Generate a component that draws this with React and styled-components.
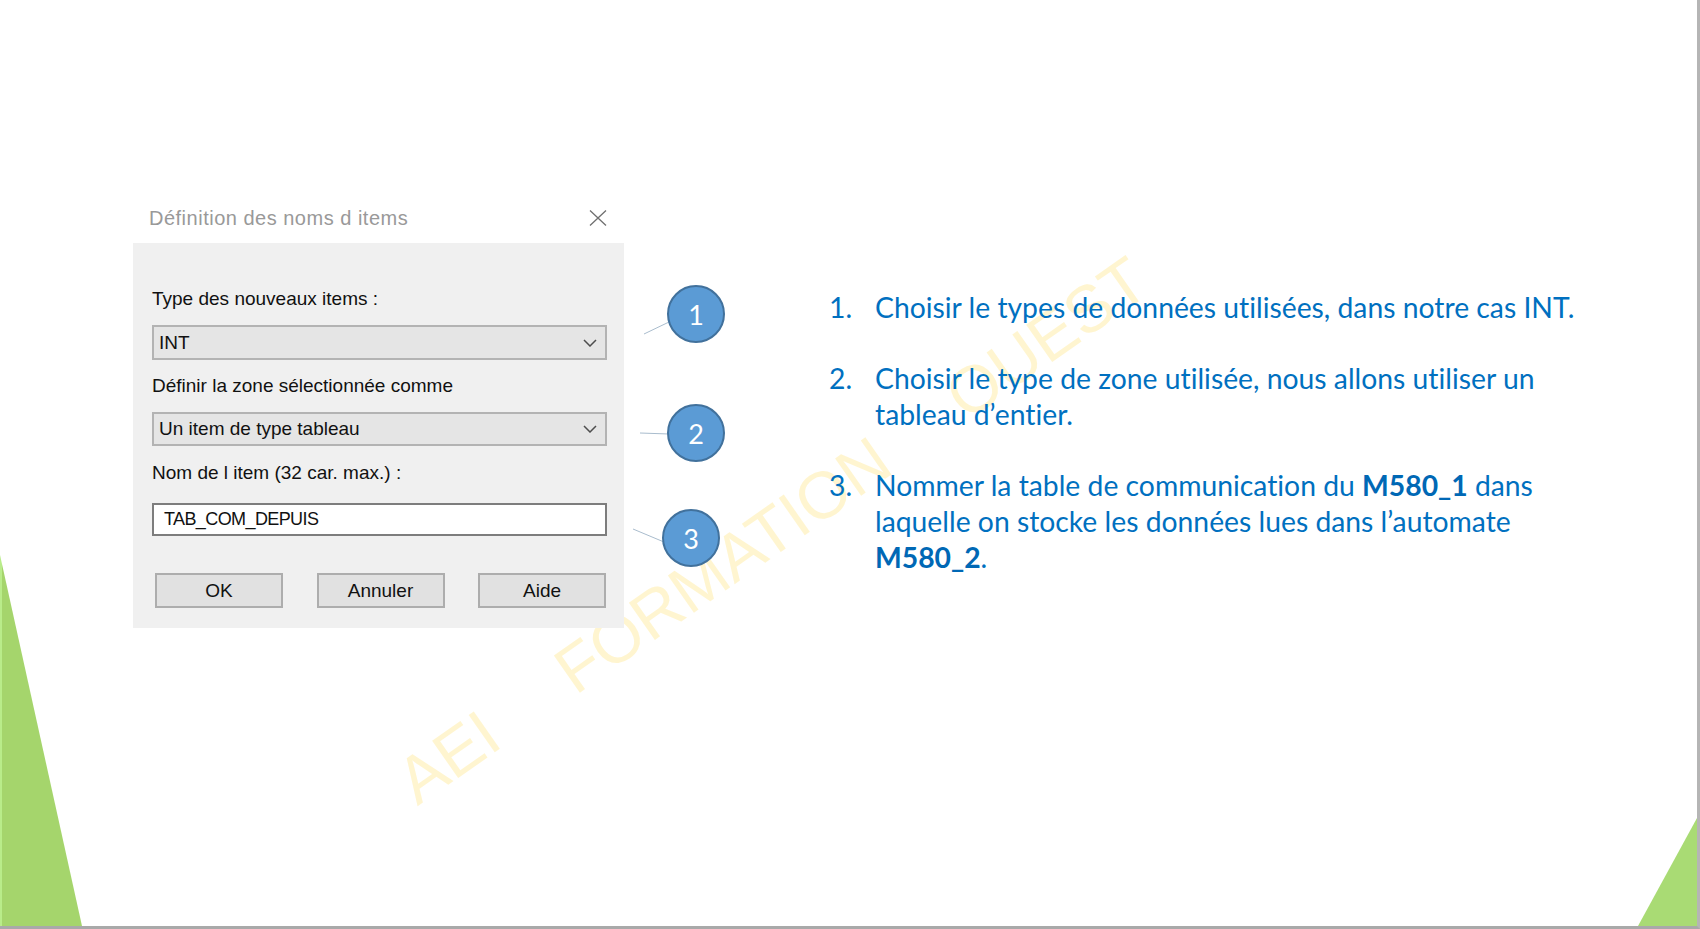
import React from 'react';
import styled, { createGlobalStyle } from 'styled-components';

const Global = createGlobalStyle`
  html, body { margin: 0; padding: 0; background: #fff; }
  body { overflow: hidden; }
`;

const Slide = styled.div`
  position: relative;
  width: 1700px;
  height: 929px;
  box-sizing: border-box;
  background: #fff;
  border-right: 3px solid #b5b5b5;
  border-bottom: 3px solid #a9a9a9;
  overflow: hidden;
`;

const CornerLeft = styled.div`
  position: absolute;
  left: 0;
  bottom: 0;
  width: 82px;
  height: 371px;
  background: linear-gradient(to right, #b9ec8a 0 2px, #a5d56c 2px);
  clip-path: polygon(0 0, 100% 100%, 0 100%);
`;

const CornerRight = styled.div`
  position: absolute;
  right: 0;
  bottom: 0;
  width: 59px;
  height: 108px;
  background: #a9db74;
  clip-path: polygon(100% 0, 100% 100%, 0 100%);
`;

const Watermark = styled.div`
  position: absolute;
  left: 772px;
  top: 530px;
  transform: translate(-50%, -50%) rotate(-35deg);
  font: 66px "Liberation Sans", Arial, sans-serif;
  color: rgba(255, 214, 60, 0.24);
  white-space: nowrap;
  word-spacing: 68px;
  pointer-events: none;
  z-index: 0;
`;

const Content = styled.div`
  position: relative;
  z-index: 1;
  display: flex;
  align-items: flex-start;
  padding: 196px 0 0 133px;
`;

const Dialog = styled.div`
  width: 491px;
  display: flex;
  flex-direction: column;
  font-family: "Liberation Sans", Arial, sans-serif;
`;

const TitleBar = styled.div`
  height: 47px;
  display: flex;
  align-items: center;
  justify-content: space-between;
  padding: 0 17px 3px 16px;
  box-sizing: border-box;
`;

const Title = styled.span`
  font-size: 20px;
  letter-spacing: 0.5px;
  color: #999;
`;

const Panel = styled.div`
  background: #f0f0f0;
  padding: 45px 17px 20px 19px;
  display: flex;
  flex-direction: column;
`;

const Label = styled.div`
  font-size: 19px;
  line-height: 22px;
  color: #111;
  margin-top: ${p => p.$mt || 0}px;
`;

const Select = styled.div`
  margin-top: ${p => p.$mt || 0}px;
  height: ${p => p.$h}px;
  box-sizing: border-box;
  background: #e5e5e5;
  border: 2px solid #b3b3b3;
  display: flex;
  align-items: center;
  justify-content: space-between;
  padding: 0 8px 0 5px;
  font-size: 19px;
  color: #111;
`;

const Input = styled.div`
  margin-top: ${p => p.$mt || 0}px;
  height: 33px;
  box-sizing: border-box;
  background: #fff;
  border: 2px solid #7d7d7d;
  display: flex;
  align-items: center;
  padding: 0 10px;
  font-size: 18px;
  letter-spacing: -0.6px;
  color: #111;
`;

const ButtonRow = styled.div`
  margin-top: 37px;
  display: flex;
  justify-content: space-between;
  padding: 0 1px 0 3px;
`;

const Button = styled.div`
  width: 128px;
  height: 35px;
  box-sizing: border-box;
  background: #e1e1e1;
  border: 2px solid #adadad;
  display: flex;
  align-items: center;
  justify-content: center;
  font-size: 19px;
  color: #111;
`;

const Callouts = styled.div`
  margin: 89px 0 0 9px;
  display: flex;
  flex-direction: column;
`;

const Callout = styled.div`
  display: flex;
  align-items: center;
  height: 58px;
  margin-top: ${p => p.$mt || 0}px;
`;

const Circle = styled.div`
  width: 58px;
  height: 58px;
  box-sizing: border-box;
  border-radius: 50%;
  background: #5b9bd5;
  border: 2px solid #41719c;
  display: flex;
  align-items: center;
  justify-content: center;
  color: #fff;
  font: 27px "Lato", "Open Sans", sans-serif;
`;

const List = styled.div`
  margin: 93px 0 0 104px;
  display: flex;
  flex-direction: column;
  gap: 35px;
  font-family: "Lato", "Open Sans", sans-serif;
  font-size: 28.3px;
  line-height: 36px;
  font-variant-ligatures: none;
  color: #0070c0;
`;

const Item = styled.div`
  display: flex;
  white-space: nowrap;
`;

const Num = styled.span`
  width: 46px;
  flex: none;
`;

const Strong = styled.b`
  font-weight: 700;
  color: #0068b5;
`;

const Chevron = () => (
  <svg width="14" height="8" viewBox="0 0 14 8">
    <path d="M1 1 L7 7 L13 1" fill="none" stroke="#4d4d4d" strokeWidth="1.5" />
  </svg>
);

const CloseX = () => (
  <svg width="18" height="16" viewBox="0 0 18 16">
    <path d="M1 0.5 L17 15.5 M17 0.5 L1 15.5" stroke="#6f6f6f" strokeWidth="1.3" />
  </svg>
);

const Connector = ({ w, x1, y1, x2, y2 }) => (
  <svg width={w} height="58" viewBox={`0 0 ${w} 58`} style={{ flex: 'none', marginRight: -2 }}>
    <line x1={x1} y1={y1} x2={x2} y2={y2} stroke="#a9bccd" strokeWidth="1" />
  </svg>
);

export default function App() {
  return (
    <>
      <Global />
      <Slide>
        <CornerLeft />
        <CornerRight />
        <Watermark>AEI FORMATION OUEST</Watermark>
        <Content>
          <Dialog>
            <TitleBar>
              <Title>Définition des noms d items</Title>
              <CloseX />
            </TitleBar>
            <Panel>
              <Label>Type des nouveaux items :</Label>
              <Select $mt={15} $h={35}>
                <span>INT</span>
                <Chevron />
              </Select>
              <Label $mt={15}>Définir la zone sélectionnée comme</Label>
              <Select $mt={15} $h={34}>
                <span>Un item de type tableau</span>
                <Chevron />
              </Select>
              <Label $mt={16}>Nom de l item (32 car. max.) :</Label>
              <Input $mt={19}>TAB_COM_DEPUIS</Input>
              <ButtonRow>
                <Button>OK</Button>
                <Button>Annuler</Button>
                <Button>Aide</Button>
              </ButtonRow>
            </Panel>
          </Dialog>
          <Callouts>
            <Callout>
              <Connector w={36} x1={11} y1={49} x2={36} y2={37} />
              <Circle>1</Circle>
            </Callout>
            <Callout $mt={61}>
              <Connector w={36} x1={7} y1={29} x2={36} y2={30} />
              <Circle>2</Circle>
            </Callout>
            <Callout $mt={47}>
              <Connector w={31} x1={0} y1={20} x2={31} y2={33} />
              <Circle>3</Circle>
            </Callout>
          </Callouts>
          <List>
            <Item>
              <Num>1.</Num>
              <span>Choisir le types de données utilisées, dans notre cas INT.</span>
            </Item>
            <Item>
              <Num>2.</Num>
              <span>
                Choisir le type de zone utilisée, nous allons utiliser un
                <br />
                tableau d’entier.
              </span>
            </Item>
            <Item>
              <Num>3.</Num>
              <span>
                Nommer la table de communication du <Strong>M580_1</Strong> dans
                <br />
                laquelle on stocke les données lues dans l’automate
                <br />
                <Strong>M580_2</Strong>.
              </span>
            </Item>
          </List>
        </Content>
      </Slide>
    </>
  );
}
